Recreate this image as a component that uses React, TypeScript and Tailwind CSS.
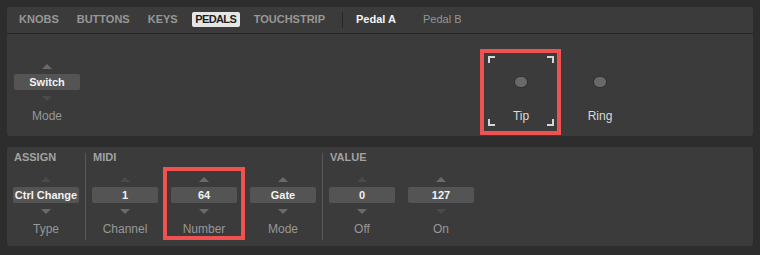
import React from 'react';

type ArrowProps = { dir: 'up' | 'down'; dim?: boolean };

function Arrow({ dir, dim }: ArrowProps) {
  return (
    <div className="h-4 flex items-center justify-center">
      <svg width="10" height="5" viewBox="0 0 10 5">
        <path
          d={dir === 'up' ? 'M0 5 L5 0 L10 5 Z' : 'M0 0 L5 5 L10 0 Z'}
          fill={dim ? '#4a4a4a' : '#6a6a6a'}
        />
      </svg>
    </div>
  );
}

interface SpinnerProps {
  value: string;
  label: string;
  up?: boolean;
  down?: boolean;
  highlight?: boolean;
}

function Spinner({ value, label, up = true, down = true, highlight }: SpinnerProps) {
  return (
    <div className="relative w-[66px] flex flex-col">
      <Arrow dir="up" dim={!up} />
      <div className="h-4 rounded-[2px] bg-[#545454] text-center text-[11px] font-bold leading-4 text-[#f2f2f2] whitespace-nowrap">
        {value}
      </div>
      <Arrow dir="down" dim={!down} />
      <div className="h-5 text-center text-[12px] leading-5 text-[#979797]">{label}</div>
      {highlight && (
        <div className="absolute -left-[8px] -right-[8px] -top-[4px] -bottom-[1px] border-[4px] border-[#f05252]" />
      )}
    </div>
  );
}

function Led({ label, focused }: { label: string; focused?: boolean }) {
  return (
    <div className="relative w-[66px] h-[70px] flex flex-col items-center">
      <div className="mt-[21px] w-3 h-3 rounded-full bg-[#696969] shadow-[0_0_0_1px_#323232]" />
      <div className="mt-[19px] h-5 text-[12px] leading-5 text-[#dadada]">{label}</div>
      {focused && (
        <>
          <div className="absolute left-0 top-0 w-[7px] h-[7px] border-l-2 border-t-2 border-[#d6d6d6]" />
          <div className="absolute right-0 top-0 w-[7px] h-[7px] border-r-2 border-t-2 border-[#d6d6d6]" />
          <div className="absolute left-0 bottom-0 w-[7px] h-[7px] border-l-2 border-b-2 border-[#d6d6d6]" />
          <div className="absolute right-0 bottom-0 w-[7px] h-[7px] border-r-2 border-b-2 border-[#d6d6d6]" />
          <div className="absolute -left-[8px] -right-[7px] -top-[7px] -bottom-[9px] border-[4px] border-[#f05252]" />
        </>
      )}
    </div>
  );
}

const TABS = ['KNOBS', 'BUTTONS', 'KEYS', 'PEDALS', 'TOUCHSTRIP'];

function Section({ title, children }: { title: string; children: React.ReactNode }) {
  return (
    <div className="flex flex-col">
      <div className="h-[8px] pl-[1px] text-[11px] font-bold leading-[8px] text-[#a2a2a2]">{title}</div>
      <div className="mt-[10px] flex gap-[13px]">{children}</div>
    </div>
  );
}

export default function App() {
  return (
    <div className="w-[760px] h-[255px] bg-[#2d2d2d] p-[7px] font-['Liberation_Sans',Arial,sans-serif]">
      {/* pedal page */}
      <div className="h-[129px] rounded-[3px] bg-[#3b3b3b] flex flex-col">
        <div className="h-[27px] pb-[1px] border-b border-[#262626] flex items-center pl-[8px]">
          <div className="flex items-center gap-[10px]">
            {TABS.map((t) =>
              t === 'PEDALS' ? (
                <div
                  key={t}
                  className="h-[15px] px-[3.5px] rounded-[2px] bg-[#e6e6e6] text-[11px] font-bold leading-[15px] tracking-[-0.6px] text-[#1d1d1d]"
                >
                  {t}
                </div>
              ) : (
                <div key={t} className="h-[15px] px-[4px] text-[11px] font-bold leading-[15px] text-[#979797]">
                  {t}
                </div>
              )
            )}
          </div>
          <div className="ml-[13px] w-px h-[16px] bg-[#262626]" />
          <div className="ml-[13px] text-[11px] font-bold leading-[15px] text-[#f4f4f4]">Pedal A</div>
          <div className="ml-[27px] text-[11px] leading-[15px] text-[#959595]">Pedal B</div>
        </div>

        <div className="flex items-start pl-[7px] pt-[24px]">
          <Spinner value="Switch" label="Mode" up down={false} />
          <div className="ml-[408px] -mt-[2px] flex gap-[13px]">
            <Led label="Tip" focused />
            <Led label="Ring" />
          </div>
        </div>
      </div>

      {/* assign panel */}
      <div className="mt-[11px] h-[99px] rounded-[3px] bg-[#3b3b3b] flex py-[6px] pl-[6px]">
        <Section title="ASSIGN">
          <Spinner value="Ctrl Change" label="Type" up={false} />
        </Section>
        <div className="mx-[6px] w-px bg-[#585858]" />
        <Section title="MIDI">
          <Spinner value="1" label="Channel" up={false} />
          <Spinner value="64" label="Number" highlight />
          <Spinner value="Gate" label="Mode" />
        </Section>
        <div className="mx-[6px] w-px bg-[#585858]" />
        <Section title="VALUE">
          <Spinner value="0" label="Off" up={false} />
          <Spinner value="127" label="On" down={false} />
        </Section>
      </div>
    </div>
  );
}
